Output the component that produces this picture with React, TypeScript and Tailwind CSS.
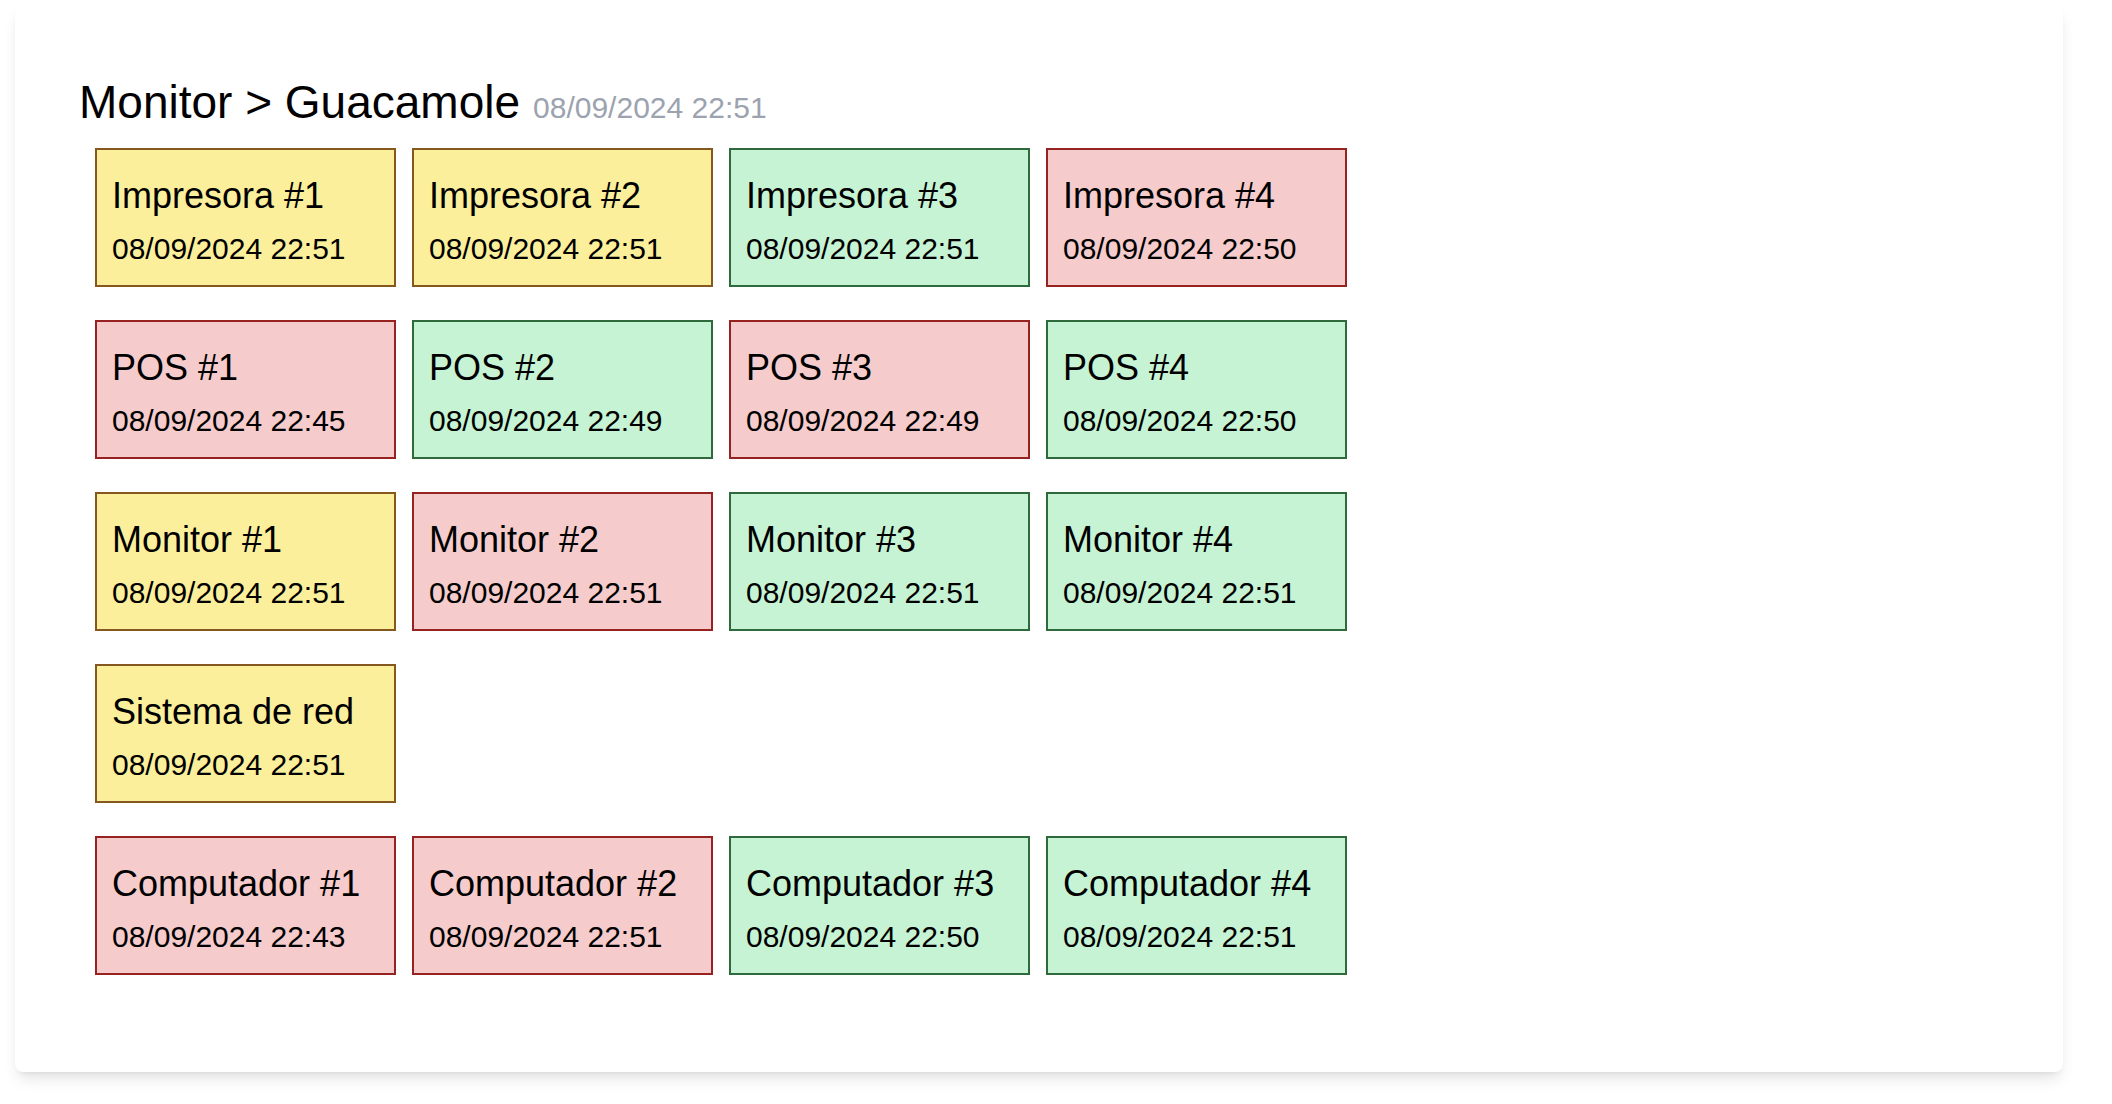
type Status = 'warn' | 'down' | 'up';

interface Device {
  name: string;
  time: string;
  status: Status;
}

const groups: Device[][] = [
  [
    { name: 'Impresora #1', time: '08/09/2024 22:51', status: 'warn' },
    { name: 'Impresora #2', time: '08/09/2024 22:51', status: 'warn' },
    { name: 'Impresora #3', time: '08/09/2024 22:51', status: 'up' },
    { name: 'Impresora #4', time: '08/09/2024 22:50', status: 'down' },
  ],
  [
    { name: 'POS #1', time: '08/09/2024 22:45', status: 'down' },
    { name: 'POS #2', time: '08/09/2024 22:49', status: 'up' },
    { name: 'POS #3', time: '08/09/2024 22:49', status: 'down' },
    { name: 'POS #4', time: '08/09/2024 22:50', status: 'up' },
  ],
  [
    { name: 'Monitor #1', time: '08/09/2024 22:51', status: 'warn' },
    { name: 'Monitor #2', time: '08/09/2024 22:51', status: 'down' },
    { name: 'Monitor #3', time: '08/09/2024 22:51', status: 'up' },
    { name: 'Monitor #4', time: '08/09/2024 22:51', status: 'up' },
  ],
  [{ name: 'Sistema de red', time: '08/09/2024 22:51', status: 'warn' }],
  [
    { name: 'Computador #1', time: '08/09/2024 22:43', status: 'down' },
    { name: 'Computador #2', time: '08/09/2024 22:51', status: 'down' },
    { name: 'Computador #3', time: '08/09/2024 22:50', status: 'up' },
    { name: 'Computador #4', time: '08/09/2024 22:51', status: 'up' },
  ],
];

const statusClasses: Record<Status, string> = {
  warn: 'bg-[#fcef9b] border-[#85581f]',
  down: 'bg-[#f5cbcb] border-[#962321]',
  up: 'bg-[#c6f3d3] border-[#2e6a3b]',
};

const DeviceTile = ({ device }: { device: Device }) => (
  <div
    className={`w-[301px] h-[139px] border-2 pl-[15px] pt-[26px] flex flex-col ${statusClasses[device.status]}`}
  >
    <span className="text-[36px] leading-[40px] text-black">{device.name}</span>
    <span className="mt-[15px] text-[30px] leading-[36px] text-black">{device.time}</span>
  </div>
);

export default function App() {
  return (
    <div className="min-h-screen bg-white font-['Liberation_Sans',Arial,sans-serif]">
      <div className="ml-[15px] mt-[4px] w-[2048px] h-[1068px] bg-white rounded-lg shadow-lg pl-[64px] pt-[74px]">
        {/* Header */}
        <div className="flex items-baseline">
          <h1 className="text-[46px] leading-[48px] font-normal text-black">Monitor &gt; Guacamole</h1>
          <span className="ml-[13px] text-[30px] text-[#9ca3af]">08/09/2024 22:51</span>
        </div>

        {/* Devices */}
        <div className="mt-[18px] pl-4 flex flex-col gap-[33px]">
          {groups.map((row, i) => (
            <div key={i} className="flex gap-4">
              {row.map((d) => (
                <DeviceTile key={d.name} device={d} />
              ))}
            </div>
          ))}
        </div>
      </div>
    </div>
  );
}
